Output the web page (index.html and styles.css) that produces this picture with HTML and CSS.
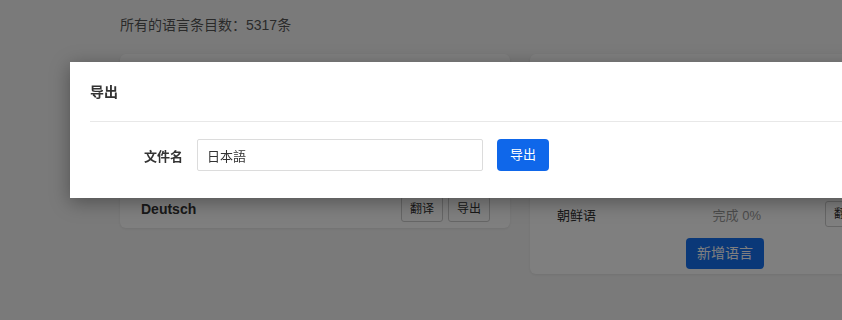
FILE: index.html
```html
<!doctype html>
<html lang="zh-CN">
<head>
  <meta charset="UTF-8">
  <meta name="viewport" content="width=device-width, initial-scale=1.0">
  <title>语言管理 - 导出</title>
  <link rel="stylesheet" href="styles.css">
</head>
<body>
  <div class="page">
    <p class="summary">所有的语言条目数：5317条</p>
    <div class="cards">
      <div class="card">
        <div class="row"><span class="name">English</span><span class="ops"><a class="btn">翻译</a><a class="btn">导出</a></span></div>
        <div class="row"><span class="name">简体中文</span><span class="ops"><a class="btn">翻译</a><a class="btn">导出</a></span></div>
        <div class="row"><span class="name">繁體中文</span><span class="ops"><a class="btn">翻译</a><a class="btn">导出</a></span></div>
        <div class="row"><span class="name">日本語</span><span class="ops"><a class="btn">翻译</a><a class="btn">导出</a></span></div>
        <div class="row"><span class="name">Deutsch</span><span class="ops"><a class="btn">翻译</a><a class="btn">导出</a></span></div>
      </div>
      <div class="card card-todo">
        <div class="row"><span class="name">Français</span><span class="state">完成 12%</span><span class="ops"><a class="btn">翻译</a><a class="btn">导出</a></span></div>
        <div class="row"><span class="name">Español</span><span class="state">完成 8%</span><span class="ops"><a class="btn">翻译</a><a class="btn">导出</a></span></div>
        <div class="row"><span class="name">Русский</span><span class="state">完成 3%</span><span class="ops"><a class="btn">翻译</a><a class="btn">导出</a></span></div>
        <div class="row"><span class="name">Italiano</span><span class="state">完成 1%</span><span class="ops"><a class="btn">翻译</a><a class="btn">导出</a></span></div>
        <div class="row"><span class="name">朝鲜语</span><span class="state">完成 0%</span><span class="ops"><a class="btn">翻译</a><a class="btn">导出</a></span></div>
        <div class="add"><a class="btn-primary btn-add">新增语言</a></div>
      </div>
    </div>
  </div>

  <div class="mask"></div>
  <div class="dialog">
    <div class="dialog-head">导出</div>
    <div class="dialog-body">
      <label class="label" for="filename">文件名</label>
      <input class="input" id="filename" type="text" value="日本語">
      <a class="btn-primary btn-export">导出</a>
    </div>
  </div>
</body>
</html>
```

FILE: styles.css
```css
html, body {
  margin: 0;
  height: 100%;
  overflow: hidden;
}
body {
  background: #f5f5f5;
  color: #333;
  font-family: "Liberation Sans", Arial, "Noto Sans CJK SC", sans-serif;
  font-size: 14px;
}
.page {
  width: 1100px;
  padding: 15px 0 0 120px;
}
.summary {
  margin: 0;
  line-height: 20px;
  color: #555;
}
.cards {
  display: flex;
  align-items: flex-start;
  gap: 20px;
  margin-top: 19px;
}
.card {
  display: flex;
  flex-direction: column;
  gap: 6px;
  width: 390px;
  box-sizing: border-box;
  padding: 14px 20px 6px 21px;
  background: #fff;
  border-radius: 6px;
  box-shadow: 0 1px 3px rgba(0, 0, 0, .08);
}
.row {
  display: flex;
  align-items: center;
  height: 26px;
}
.row .name {
  flex: 1;
  font-weight: bold;
}
.ops {
  display: flex;
  gap: 5px;
}
.btn {
  display: inline-block;
  box-sizing: border-box;
  height: 26px;
  padding: 0 8px;
  line-height: 24px;
  border: 1px solid #ccc;
  border-radius: 3px;
  background: #fff;
  font-size: 12px;
  color: #333;
}
.card-todo {
  gap: 8px;
  padding: 11px 6px 5px 27px;
}
.card-todo .name {
  font-weight: normal;
  font-size: 13px;
}
.card-todo .state {
  color: #999;
  font-size: 13px;
  margin-right: 64px;
}
.add {
  display: flex;
  justify-content: center;
  margin: 3px -6px 0 -27px;
}
.btn-primary {
  display: inline-block;
  box-sizing: border-box;
  background: #0f67ea;
  color: #fff;
  border-radius: 4px;
  text-align: center;
}
.btn-add {
  width: 78px;
  height: 31px;
  line-height: 31px;
  background: #1570f0;
}
.mask {
  position: fixed;
  inset: 0;
  background: rgba(0, 0, 0, .5);
}
.dialog {
  position: absolute;
  top: 62px;
  left: 70px;
  width: 900px;
  background: #fff;
  box-shadow: 0 4px 18px rgba(0, 0, 0, .35);
}
.dialog-head {
  margin: 0 20px;
  padding: 20px 0 19px;
  line-height: 20px;
  font-weight: bold;
  color: #333;
  border-bottom: 1px solid #e8e8e8;
}
.dialog-body {
  display: flex;
  align-items: center;
  padding: 17px 20px 27px;
}
.label {
  width: 93px;
  margin-right: 14px;
  text-align: right;
  font-size: 13px;
  font-weight: bold;
  color: #333;
}
.input {
  box-sizing: border-box;
  width: 286px;
  height: 32px;
  margin: 0 14px 0 0;
  padding: 0 9px;
  border: 1px solid #dcdcdc;
  border-radius: 2px;
  font-family: inherit;
  font-size: 13px;
  color: #333;
  outline: none;
}
.btn-export {
  width: 52px;
  height: 32px;
  line-height: 32px;
  font-size: 13px;
}
```
